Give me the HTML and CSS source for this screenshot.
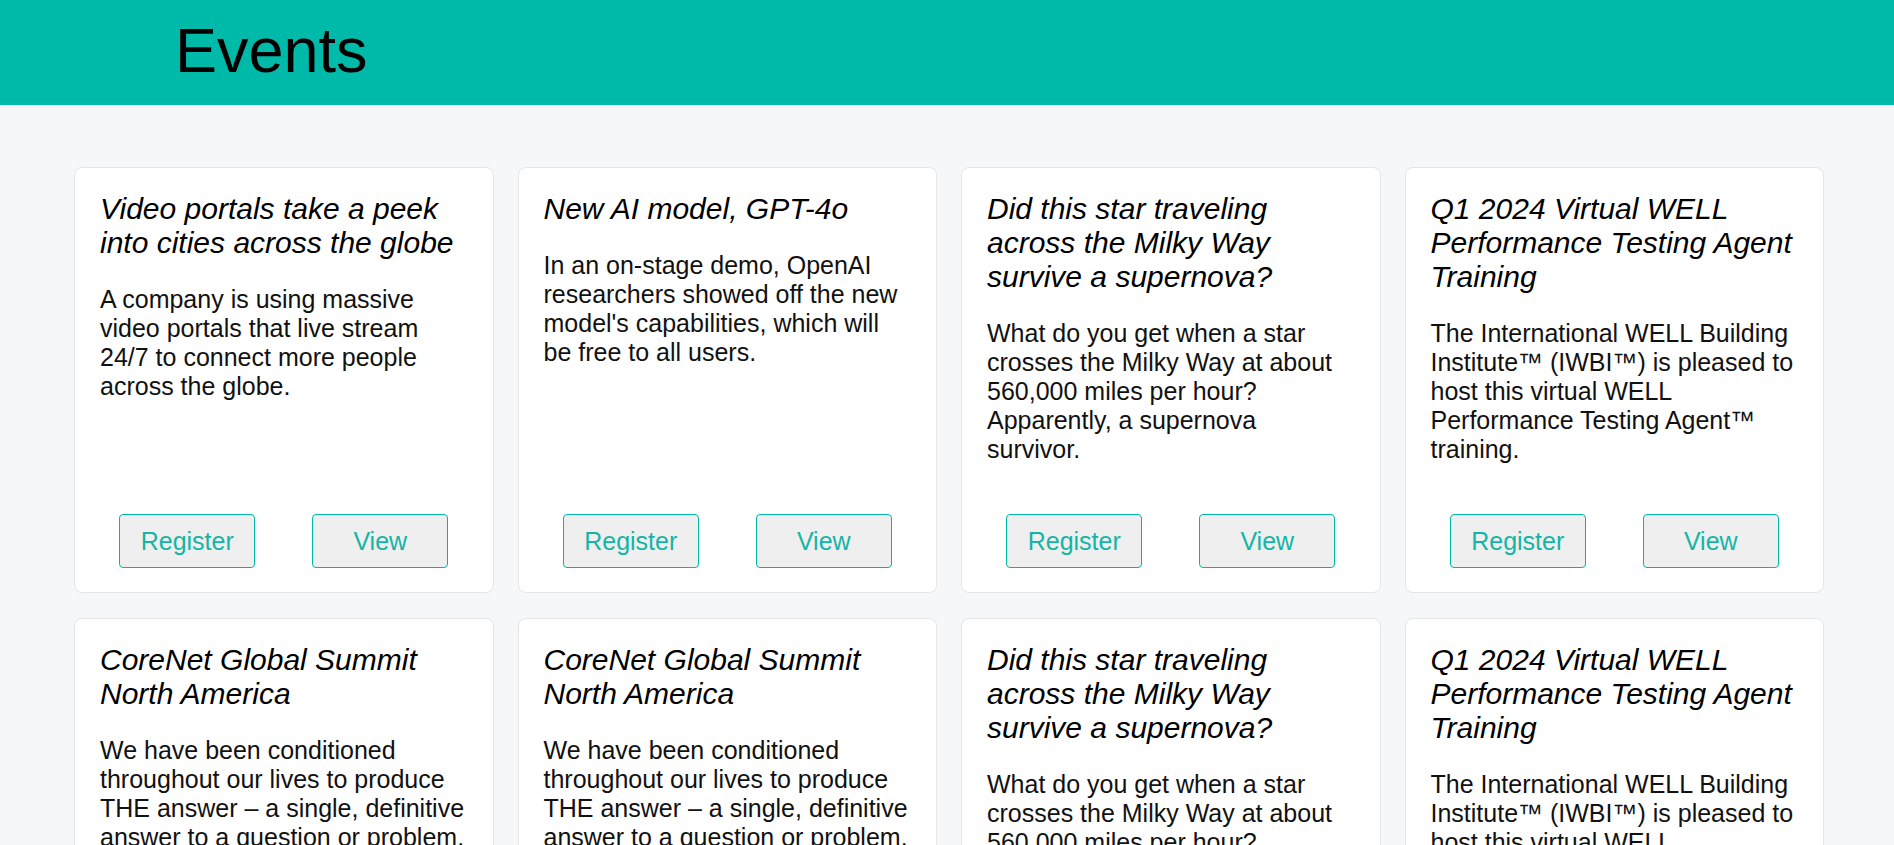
FILE: index.html
```html
<!DOCTYPE html>
<html lang="en">
<head>
<meta charset="utf-8">
<title>Events</title>
<link rel="stylesheet" href="styles.css">
</head>
<body>
<header class="topbar">
  <h1 class="topbar-title">Events</h1>
</header>
<main class="events">
  <article class="card">
    <h2 class="card-title">Video portals take a peek into cities across the globe</h2>
    <p class="card-text">A company is using massive video portals that live stream 24/7 to connect more people across the globe.</p>
    <div class="card-actions"><button class="btn">Register</button><button class="btn">View</button></div>
  </article>
  <article class="card">
    <h2 class="card-title">New AI model, GPT-4o</h2>
    <p class="card-text">In an on-stage demo, OpenAI researchers showed off the new model's capabilities, which will be free to all users.</p>
    <div class="card-actions"><button class="btn">Register</button><button class="btn">View</button></div>
  </article>
  <article class="card">
    <h2 class="card-title">Did this star traveling across the Milky Way survive a supernova?</h2>
    <p class="card-text">What do you get when a star crosses the Milky Way at about 560,000 miles per hour? Apparently, a supernova survivor.</p>
    <div class="card-actions"><button class="btn">Register</button><button class="btn">View</button></div>
  </article>
  <article class="card">
    <h2 class="card-title">Q1 2024 Virtual WELL Performance Testing Agent Training</h2>
    <p class="card-text">The International WELL Building Institute™ (IWBI™) is pleased to host this virtual WELL Performance Testing Agent™ training.</p>
    <div class="card-actions"><button class="btn">Register</button><button class="btn">View</button></div>
  </article>
  <article class="card">
    <h2 class="card-title">CoreNet Global Summit North America</h2>
    <p class="card-text">We have been conditioned throughout our lives to produce THE answer – a single, definitive answer to a question or problem.</p>
    <div class="card-actions"><button class="btn">Register</button><button class="btn">View</button></div>
  </article>
  <article class="card">
    <h2 class="card-title">CoreNet Global Summit North America</h2>
    <p class="card-text">We have been conditioned throughout our lives to produce THE answer – a single, definitive answer to a question or problem.</p>
    <div class="card-actions"><button class="btn">Register</button><button class="btn">View</button></div>
  </article>
  <article class="card">
    <h2 class="card-title">Did this star traveling across the Milky Way survive a supernova?</h2>
    <p class="card-text">What do you get when a star crosses the Milky Way at about 560,000 miles per hour? Apparently, a supernova survivor.</p>
    <div class="card-actions"><button class="btn">Register</button><button class="btn">View</button></div>
  </article>
  <article class="card">
    <h2 class="card-title">Q1 2024 Virtual WELL Performance Testing Agent Training</h2>
    <p class="card-text">The International WELL Building Institute™ (IWBI™) is pleased to host this virtual WELL Performance Testing Agent™ training.</p>
    <div class="card-actions"><button class="btn">Register</button><button class="btn">View</button></div>
  </article>
</main>
</body>
</html>
```
FILE: styles.css
```css
* {
  box-sizing: border-box;
}

html, body {
  margin: 0;
  padding: 0;
}

body {
  background: #f6f7f9;
  font-family: "Liberation Sans", Arial, sans-serif;
  color: #000;
}

.topbar {
  height: 105px;
  background: #00baa9;
  padding: 14px 0 0 175px;
}

.topbar-title {
  margin: 0;
  font-size: 63px;
  font-weight: normal;
  line-height: normal;
  color: #000;
}

.events {
  display: grid;
  grid-template-columns: repeat(4, 1fr);
  gap: 25px 24px;
  padding: 62px 70px 40px 74px;
}

.card {
  display: flex;
  flex-direction: column;
  background: #fff;
  border: 1px solid #e3e5e8;
  border-radius: 8px;
  padding: 24px 25px;
}

.card-title {
  margin: 0;
  font-size: 30px;
  line-height: 34px;
  font-style: italic;
  font-weight: normal;
  color: #000;
}

.card-text {
  margin: 25px 0;
  font-size: 25px;
  line-height: 29px;
  color: #111;
}

.card-actions {
  margin-top: auto;
  padding-top: 25px;
  display: flex;
  justify-content: center;
  gap: 57px;
}

.btn {
  width: 136px;
  height: 54px;
  background: #efefef;
  border: 1px solid #00b8a7;
  border-radius: 4px;
  color: #14b5a6;
  font-family: "Liberation Sans", Arial, sans-serif;
  font-size: 25px;
  padding: 0;
  cursor: pointer;
}
```
